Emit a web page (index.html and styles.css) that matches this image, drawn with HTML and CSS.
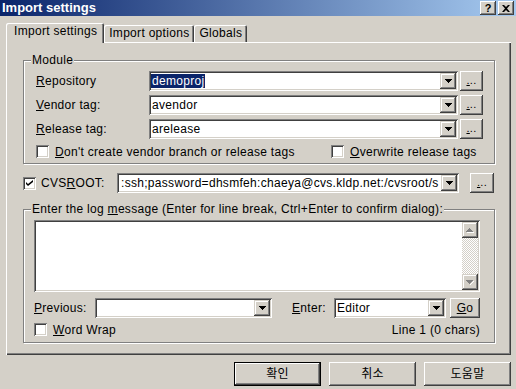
FILE: index.html
```html
<!DOCTYPE html>
<html lang="ko">
<head>
    <meta charset="UTF-8">
    <meta name="viewport" content="width=device-width, initial-scale=1.0">
    <title>Import settings</title>
    <link rel="stylesheet" href="styles.css">
</head>
<body>
<div class="dialog">
    <div class="titlebar">
        <span class="title">Import settings</span>
        <div class="caption-btns">
            <span class="cbtn help">?</span>
            <span class="cbtn"><svg width="8" height="7" viewBox="0 0 8 7"><path d="M0 0h2l2 2 2-2h2L5 3.5 8 7H6L4 5 2 7H0l3-3.5z"/></svg></span>
        </div>
    </div>

    <div class="tabs">
        <div class="tab active">Import settings</div>
        <div class="tab">Import options</div>
        <div class="tab">Globals</div>
    </div>

    <div class="panel">
        <div class="group module">
            <span class="legend">Module</span>
            <div class="module-grid">
                <span class="label"><u>R</u>epository</span>
                <div class="combo"><span class="value"><span class="sel">demoproj</span></span><span class="drop"><svg width="7" height="4" viewBox="0 0 7 4"><path d="M0 0h7v1h-1v1h-1v1h-1v1h-1v-1h-1v-1h-1v-1h-1z"/></svg></span></div>
                <span class="btn small"><u>.</u>..</span>

                <span class="label"><u>V</u>endor tag:</span>
                <div class="combo"><span class="value">avendor</span><span class="drop"><svg width="7" height="4" viewBox="0 0 7 4"><path d="M0 0h7v1h-1v1h-1v1h-1v1h-1v-1h-1v-1h-1v-1h-1z"/></svg></span></div>
                <span class="btn small"><u>.</u>..</span>

                <span class="label"><u>R</u>elease tag:</span>
                <div class="combo"><span class="value">arelease</span><span class="drop"><svg width="7" height="4" viewBox="0 0 7 4"><path d="M0 0h7v1h-1v1h-1v1h-1v1h-1v-1h-1v-1h-1v-1h-1z"/></svg></span></div>
                <span class="btn small"><u>.</u>..</span>
            </div>
            <div class="checks">
                <label class="check wide"><span class="cb"></span><span><u>D</u>on't create vendor branch or release tags</span></label>
                <label class="check"><span class="cb"></span><span><u>O</u>verwrite release tags</span></label>
            </div>
        </div>

        <div class="cvsroot">
            <label class="check root-label"><span class="cb"><svg width="7" height="7" viewBox="0 0 7 7"><path d="M0 2l2 2 5-4v2L2 6 0 4z"/></svg></span><span>CVS<u>R</u>OOT:</span></label>
            <div class="combo root-combo"><span class="value">:ssh;password=dhsmfeh:chaeya@cvs.kldp.net:/cvsroot/s</span><span class="drop"><svg width="7" height="4" viewBox="0 0 7 4"><path d="M0 0h7v1h-1v1h-1v1h-1v1h-1v-1h-1v-1h-1v-1h-1z"/></svg></span></div>
            <span class="btn small root-btn"><u>.</u>..</span>
        </div>

        <div class="group log">
            <span class="legend">Enter the log <u>m</u>essage (Enter for line break, Ctrl+Enter to confirm dialog):</span>
            <div class="editbox">
                <div class="edit-area"></div>
                <div class="scrollbar">
                    <span class="sbtn"><svg width="8" height="5" viewBox="0 0 8 5"><path fill="#fff" d="M1 4h7v1h-7z"/><path fill="#808080" d="M3 0h1v1h1v1h1v1h1v1h-7v-1h1v-1h1v-1h1z"/></svg></span>
                    <span class="track"></span>
                    <span class="sbtn"><svg width="8" height="5" viewBox="0 0 8 5"><path fill="#fff" d="M4 4h1v-1h1v-1h1v-1h1v1h-1v1h-1v1h-1v1h-1z"/><path fill="#808080" d="M0 0h7v1h-1v1h-1v1h-1v1h-1v-1h-1v-1h-1v-1h-1z"/></svg></span>
                </div>
            </div>
            <div class="log-row">
                <span class="label prev-label"><u>P</u>revious:</span>
                <div class="combo prev-combo"><span class="value"></span><span class="drop"><svg width="7" height="4" viewBox="0 0 7 4"><path d="M0 0h7v1h-1v1h-1v1h-1v1h-1v-1h-1v-1h-1v-1h-1z"/></svg></span></div>
                <span class="label enter-label"><u>E</u>nter:</span>
                <div class="combo enter-combo"><span class="value">Editor</span><span class="drop"><svg width="7" height="4" viewBox="0 0 7 4"><path d="M0 0h7v1h-1v1h-1v1h-1v1h-1v-1h-1v-1h-1v-1h-1z"/></svg></span></div>
                <span class="btn go"><u>G</u>o</span>
            </div>
            <div class="wrap-row">
                <label class="check"><span class="cb"></span><span><u>W</u>ord Wrap</span></label>
                <span class="status">Line 1 (0 chars)</span>
            </div>
        </div>
    </div>

    <div class="footer">
        <span class="btn push default">확인</span>
        <span class="btn push">취소</span>
        <span class="btn push">도움말</span>
    </div>
</div>
</body>
</html>
```

FILE: styles.css
```css
body {
    margin: 0;
    background: #d4d0c8;
    font-family: 'Liberation Sans', 'Noto Sans CJK KR', sans-serif;
    font-size: 12px;
    letter-spacing: 0.3px;
    color: #000;
}
u {
    text-decoration-thickness: 1px;
    text-underline-offset: 1px;
}
.dialog {
    width: 516px;
    height: 389px;
    background: #d4d0c8;
    overflow: hidden;
}

/* title bar */
.titlebar {
    height: 16px;
    display: flex;
    justify-content: space-between;
    padding: 0 2px;
    background: linear-gradient(to right, #0a246a, #a6caf0);
}
.title {
    color: #fff;
    font-weight: bold;
    font-size: 13px;
    line-height: 16px;
    letter-spacing: 0;
}
.caption-btns {
    display: flex;
    gap: 2px;
    padding-top: 1px;
}
.cbtn {
    width: 16px;
    height: 14px;
    box-sizing: border-box;
    display: flex;
    align-items: center;
    justify-content: center;
    background: #d4d0c8;
    box-shadow: inset -1px -1px #404040, inset 1px 1px #fff, inset -2px -2px #808080;
    font-weight: bold;
    font-size: 11px;
    line-height: 14px;
    letter-spacing: 0;
}

/* tabs */
.tabs {
    display: flex;
    align-items: flex-end;
    height: 19px;
    margin-top: 7px;
    padding-left: 6px;
}
.tab {
    height: 17px;
    padding: 1px 5px 0;
    box-sizing: border-box;
    line-height: 14px;
    border-radius: 2px 2px 0 0;
    box-shadow: inset 1px 1px #fff, inset -1px 0 #404040, inset -2px 0 #808080;
}
.tab.active {
    height: 20px;
    padding: 1px 7px 0 8px;
    margin-bottom: -1px;
    background: #d4d0c8;
    position: relative;
    z-index: 1;
}

/* panel */
.panel {
    width: 505px;
    margin-left: 6px;
    box-sizing: border-box;
    padding: 18px 16px 12px 17px;
    box-shadow: inset 1px 1px #fff, inset -1px -1px #404040, inset -2px -2px #808080;
}
.group {
    position: relative;
    border: 1px solid #808080;
    box-shadow: inset 1px 1px #fff, 1px 1px #fff;
}
.legend {
    position: absolute;
    top: -8px;
    left: 7px;
    padding: 0 1px;
    background: #d4d0c8;
    line-height: 14px;
    white-space: nowrap;
}
.module {
    padding: 10px 13px 5px 12px;
}
.module-grid {
    display: grid;
    grid-template-columns: 111px 309px 23px;
    grid-auto-rows: 20px;
    row-gap: 4px;
    column-gap: 2px;
    align-items: center;
}
.label {
    line-height: 14px;
    white-space: nowrap;
}
.combo {
    display: flex;
    height: 20px;
    box-sizing: border-box;
    padding: 2px;
    background: #fff;
    box-shadow: inset 1px 1px #808080, inset -1px -1px #fff, inset 2px 2px #404040, inset -2px -2px #d4d0c8;
}
.combo .value {
    flex: 1;
    padding-left: 1px;
    line-height: 16px;
    overflow: hidden;
    white-space: nowrap;
}
.sel {
    background: #0a246a;
    color: #fff;
    padding: 0 1px;
    margin-left: -1px;
}
.drop {
    width: 16px;
    height: 16px;
    flex: none;
    display: flex;
    align-items: center;
    justify-content: center;
    background: #d4d0c8;
    box-shadow: inset -1px -1px #404040, inset 1px 1px #d4d0c8, inset -2px -2px #808080, inset 2px 2px #fff;
}
.btn {
    display: flex;
    align-items: center;
    justify-content: center;
    box-sizing: border-box;
    background: #d4d0c8;
    box-shadow: inset -1px -1px #404040, inset 1px 1px #fff, inset -2px -2px #808080;
    line-height: 14px;
}
.btn.small {
    height: 20px;
    padding-bottom: 2px;
    font-size: 11px;
}
.checks {
    display: flex;
    margin-top: 6px;
}
.check {
    display: flex;
    align-items: center;
    gap: 6px;
    height: 13px;
    line-height: 14px;
    white-space: nowrap;
}
.check.wide {
    width: 295px;
}
.cb {
    width: 13px;
    height: 13px;
    flex: none;
    box-sizing: border-box;
    display: flex;
    align-items: center;
    justify-content: center;
    background: #fff;
    box-shadow: inset 1px 1px #808080, inset -1px -1px #fff, inset 2px 2px #404040, inset -2px -2px #d4d0c8;
}

/* cvsroot row */
.cvsroot {
    display: flex;
    align-items: center;
    height: 20px;
    margin: 9px 0 16px;
}
.root-label {
    width: 94px;
    gap: 5px;
}
.root-combo {
    width: 342px;
}
.root-combo .value {
    padding-left: 2px;
}
.root-btn {
    width: 24px;
    margin-left: 11px;
}

/* log group */
.log {
    padding: 10px 14px 6px 10px;
}
.editbox {
    display: flex;
    height: 72px;
    box-sizing: border-box;
    padding: 2px;
    background: #fff;
    box-shadow: inset 1px 1px #808080, inset -1px -1px #fff, inset 2px 2px #404040, inset -2px -2px #d4d0c8;
}
.edit-area {
    flex: 1;
}
.scrollbar {
    width: 16px;
    display: flex;
    flex-direction: column;
}
.sbtn {
    height: 16px;
    flex: none;
    display: flex;
    align-items: center;
    justify-content: center;
    background: #d4d0c8;
    box-shadow: inset -1px -1px #404040, inset 1px 1px #d4d0c8, inset -2px -2px #808080, inset 2px 2px #fff;
}
.track {
    flex: 1;
    background-image: conic-gradient(#fff 25%, #d4d0c8 0 50%, #fff 0 75%, #d4d0c8 0);
    background-size: 2px 2px;
}
.log-row {
    display: flex;
    align-items: center;
    height: 20px;
    margin-top: 6px;
}
.prev-label {
    width: 61px;
}
.prev-combo {
    width: 177px;
}
.enter-label {
    width: 42px;
    margin-left: auto;
}
.enter-combo {
    width: 112px;
}
.go {
    width: 30px;
    height: 20px;
    margin-left: 4px;
}
.wrap-row {
    display: flex;
    align-items: center;
    justify-content: space-between;
    margin-top: 5px;
    height: 13px;
}
.status {
    line-height: 14px;
}

/* footer buttons */
.footer {
    display: flex;
    justify-content: flex-end;
    gap: 8px;
    padding: 7px 5px 0 0;
}
.push {
    width: 87px;
    height: 24px;
    font-size: 12px;
}
.push.default {
    box-shadow: inset 0 0 0 1px #000, inset -2px -2px #404040, inset 2px 2px #fff, inset -3px -3px #808080;
}
```
